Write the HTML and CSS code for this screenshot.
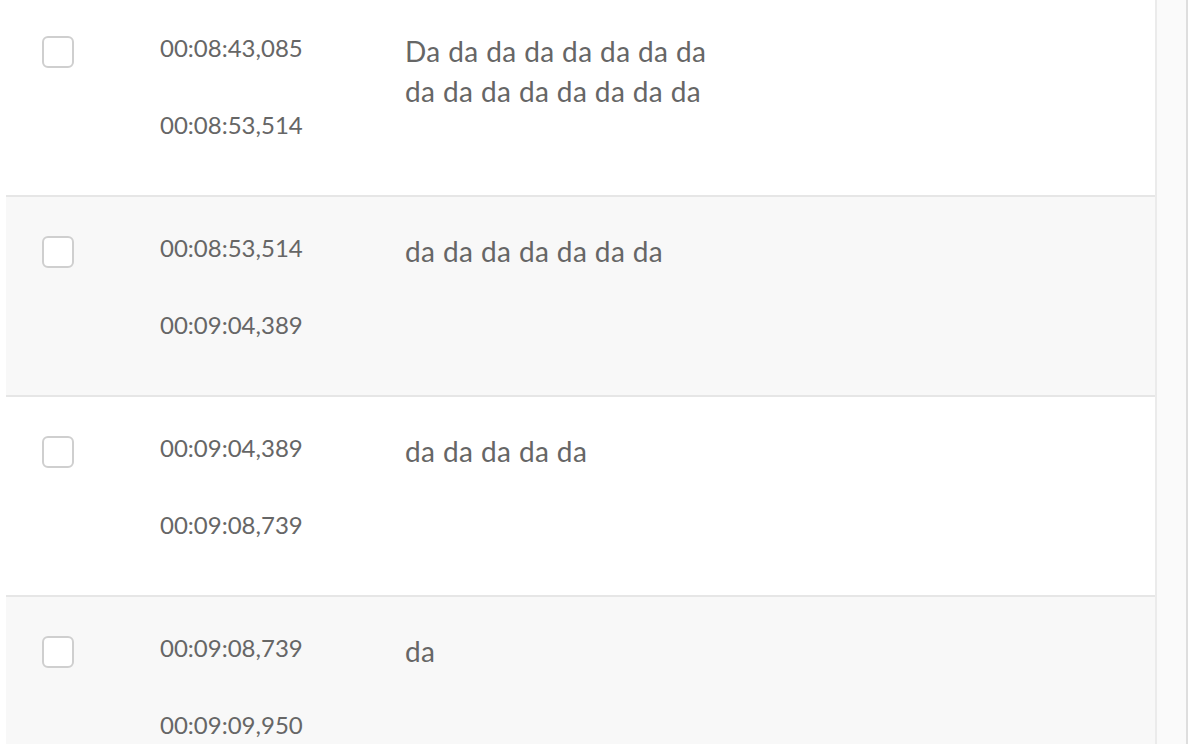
FILE: index.html
```html
<!DOCTYPE html>
<html>
<head>
<meta charset="utf-8">
<link rel="stylesheet" href="styles.css">
</head>
<body>
<div class="page">
  <div class="list">
    <div class="row">
      <div class="check"></div>
      <div class="times"><div class="t">00:08:43,085</div><div class="t">00:08:53,514</div></div>
      <div class="text">Da da da da da da da da<br>da da da da da da da da</div>
    </div>
    <div class="row alt">
      <div class="check"></div>
      <div class="times"><div class="t">00:08:53,514</div><div class="t">00:09:04,389</div></div>
      <div class="text">da da da da da da da</div>
    </div>
    <div class="row">
      <div class="check"></div>
      <div class="times"><div class="t">00:09:04,389</div><div class="t">00:09:08,739</div></div>
      <div class="text">da da da da da</div>
    </div>
    <div class="row alt">
      <div class="check"></div>
      <div class="times"><div class="t">00:09:08,739</div><div class="t">00:09:09,950</div></div>
      <div class="text">da</div>
    </div>
  </div>
  <div class="rail"></div>
</div>
</body>
</html>
```
FILE: styles.css
```css
html, body {
  margin: 0;
  padding: 0;
  background: #fff;
  overflow: hidden;
}
body {
  font-family: Lato, "Open Sans", sans-serif;
  color: #666;
}
.page {
  display: flex;
  height: 744px;
  padding-left: 6px;
}
.list {
  flex: 1;
  margin-top: -3px;
}
.row {
  height: 198px;
  border-bottom: 2px solid #e6e6e6;
  display: flex;
  align-items: flex-start;
}
.row.alt {
  background: #f8f8f8;
}
.check {
  width: 28px;
  height: 28px;
  border: 2px solid #cfcfcf;
  border-radius: 6px;
  background: #fff;
  margin: 39px 0 0 36px;
  flex: none;
}
.times {
  margin: 37px 0 0 86px;
  width: 245px;
  flex: none;
  display: flex;
  flex-direction: column;
  gap: 49px;
}
.t {
  font-size: 24px;
  line-height: 28px;
}
.text {
  margin-top: 34px;
  font-size: 28px;
  line-height: 40px;
  letter-spacing: 0.4px;
}
.rail {
  width: 29px;
  flex: none;
  background: #fafafa;
  border-left: 2px solid #ebebeb;
  border-right: 2px solid #dedede;
}
```
